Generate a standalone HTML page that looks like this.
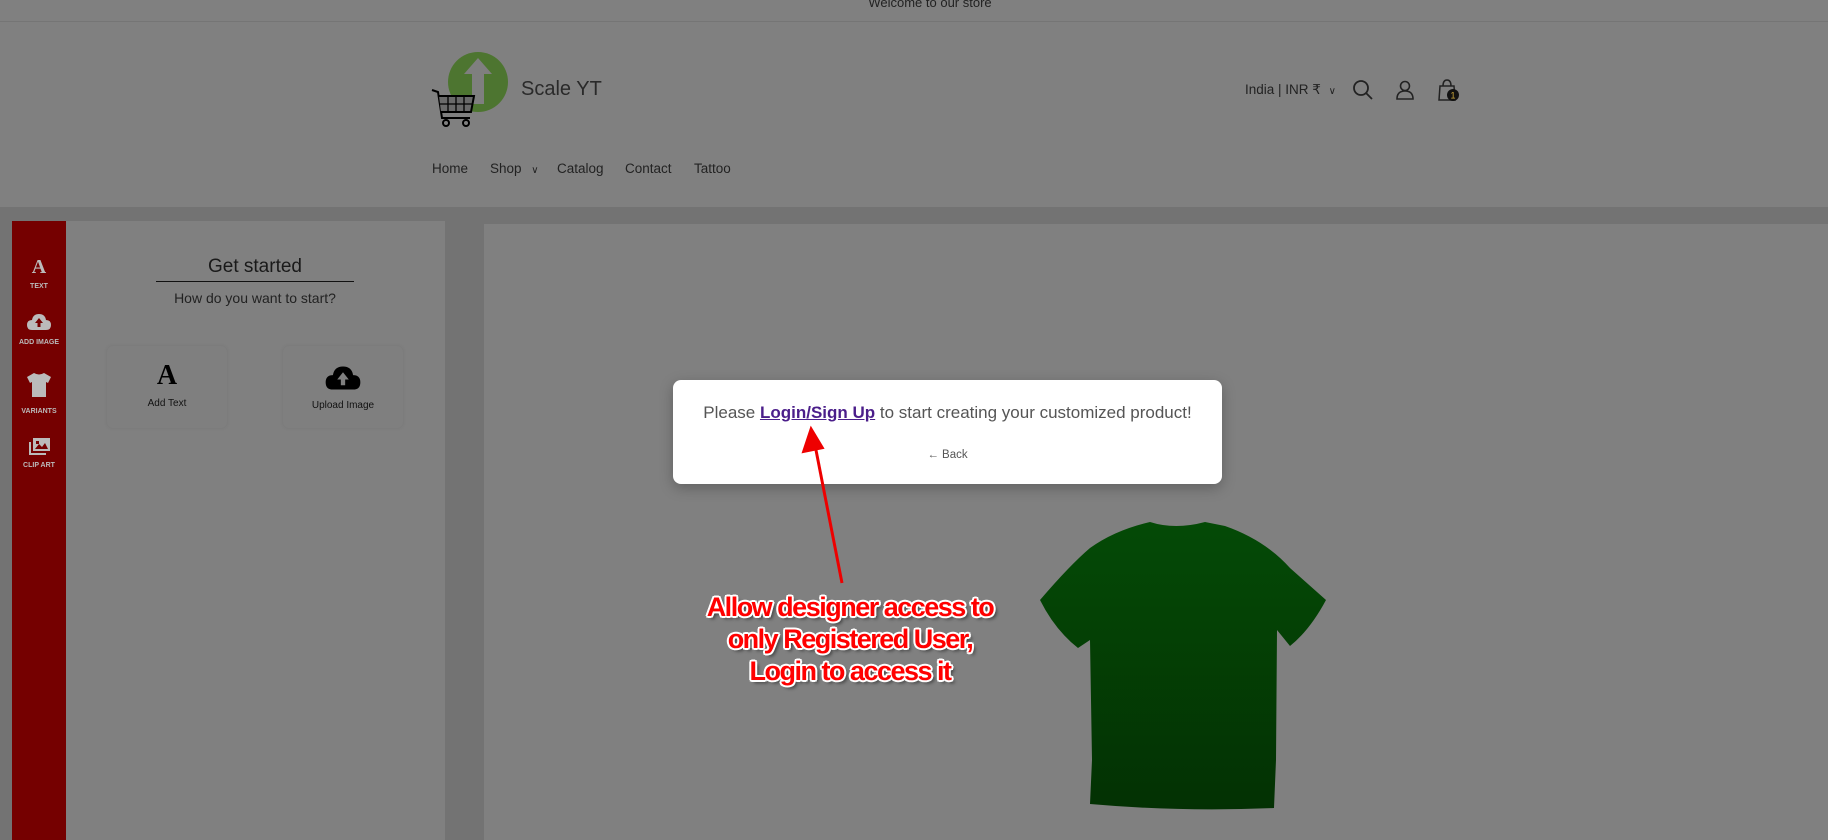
<!DOCTYPE html>
<html><head><meta charset="utf-8"><style>
*{margin:0;padding:0;box-sizing:border-box}
body{width:1828px;height:840px;overflow:hidden;background:#737373;font-family:"Liberation Sans",sans-serif;position:relative}
.abs{position:absolute}
.hdr{left:0;top:0;width:1828px;height:207px;background:#808080}
.nav span{position:absolute;top:161px;font-size:13.5px;color:#222}
.side{left:12px;top:221px;width:54px;height:619px;background:#750000}
.sideitem{position:absolute;left:12px;width:54px;text-align:center;color:#bbb;font-size:7px;font-weight:bold}
.panel{left:66px;top:221px;width:379px;height:619px;background:#808080}
.canvas{left:484px;top:224px;width:1344px;height:616px;background:#808080}
.card{position:absolute;top:346px;width:120px;height:82px;border-radius:6px;background:#7f7f7f;box-shadow:0 0 4px rgba(0,0,0,.08);text-align:center;font-size:10px;color:#111}
.modal{left:673px;top:380px;width:549px;height:104px;background:#fff;border-radius:8px;box-shadow:0 4px 14px rgba(0,0,0,.25)}
.ann{left:620px;width:460px;text-align:center;font-weight:bold;font-size:27px;letter-spacing:-1.5px;color:#f00;line-height:32px;text-shadow:2px 0 #fff,-2px 0 #fff,0 2px #fff,0 -2px #fff,1.5px 1.5px #fff,-1.5px -1.5px #fff,1.5px -1.5px #fff,-1.5px 1.5px #fff,3px 3px 3px rgba(0,0,0,.5)}
</style></head><body>
<div class="abs hdr"></div>
<div class="abs" style="left:0;top:21px;width:1828px;height:1px;background:#757575"></div>
<div class="abs" style="left:0;top:-5px;width:1860px;text-align:center;font-size:13px;color:#222">Welcome to our store</div>
<svg class="abs" style="left:430px;top:48px" width="80" height="80" viewBox="0 0 80 80">
<circle cx="48" cy="34" r="30" fill="#4d7530"/>
<path d="M48 10 L62 26 L54 26 L54 56 L42 56 L42 26 L34 26Z" fill="#7f7f7f"/>
<path d="M2 42 L8 44 L12 70 L40 70" stroke="#000" stroke-width="2" fill="none"/>
<path d="M9 48 L44 48 L41 64 L11 64" stroke="#000" stroke-width="2" fill="#6a6a6a"/>
<path d="M18 48V64M26 48V64M34 48V64M10 56H42" stroke="#000" stroke-width="1.3"/>
<circle cx="16" cy="75" r="3" fill="none" stroke="#000" stroke-width="2"/><circle cx="36" cy="75" r="3" fill="none" stroke="#000" stroke-width="2"/>
</svg>
<div class="abs" style="left:521px;top:78px;font-size:20px;color:#2a2a2a">Scale YT</div>
<div class="nav"><span style="left:432px">Home</span><span style="left:490px">Shop <small style="font-size:10px;margin-left:6px">&#8744;</small></span><span style="left:557px">Catalog</span><span style="left:625px">Contact</span><span style="left:694px">Tattoo</span></div>
<div class="abs" style="left:1245px;top:82px;font-size:13.5px;color:#222">India | INR ₹ <span style="font-size:10px;margin-left:4px">&#8744;</span></div>
<svg class="abs" style="left:1352px;top:78px" width="120" height="30" viewBox="0 0 120 30">
<circle cx="9" cy="10" r="7" fill="none" stroke="#222" stroke-width="1.8"/><path d="M14 15 L20 21" stroke="#222" stroke-width="1.8"/>
<circle cx="53" cy="8" r="4.5" fill="none" stroke="#222" stroke-width="1.6"/><path d="M45 21 Q45 13 53 13 Q61 13 61 21Z" fill="none" stroke="#222" stroke-width="1.6"/>
<path d="M88 8 H102 L103 22 H87Z" fill="none" stroke="#222" stroke-width="1.5"/><path d="M91 8 Q91 2 95 2 Q99 2 99 8" fill="none" stroke="#222" stroke-width="1.5"/>
<circle cx="101" cy="17" r="6" fill="#111"/><text x="101" y="20.5" font-size="9" fill="#c9a53a" text-anchor="middle" font-family="Liberation Sans">1</text>
</svg>
<div class="abs side"></div>
<div class="sideitem" style="top:256px;font-size:20px;font-family:'Liberation Serif',serif">A</div>
<div class="sideitem" style="top:283px">TEXT</div>
<svg class="abs" style="left:27px;top:313px" width="24" height="18" viewBox="0 0 24 18"><path d="M5 17 Q0 17 0 12 Q0 7 5 7 Q6 1 12 1 Q18 1 19 7 Q24 7 24 12 Q24 17 19 17Z" fill="#bbb"/><path d="M12 5 L16 10 H13.5 V14 H10.5 V10 H8Z" fill="#750000"/></svg>
<div class="sideitem" style="top:339px">ADD IMAGE</div>
<svg class="abs" style="left:26px;top:372px" width="26" height="26" viewBox="0 0 26 26"><path d="M8 1 Q13 4 18 1 L25 5 L22 11 L20 10 V25 H6 V10 L4 11 L1 5Z" fill="#bbb"/></svg>
<div class="sideitem" style="top:408px">VARIANTS</div>
<svg class="abs" style="left:27px;top:437px" width="24" height="20" viewBox="0 0 24 20"><rect x="6" y="1" width="17" height="13" fill="#bbb"/><path d="M8 12 L12 7 L15 10 L18 6 L21 12Z M9 4h3v3H9z" fill="#750000"/><path d="M3 5 V17 H19" stroke="#bbb" stroke-width="2" fill="none"/></svg>
<div class="sideitem" style="top:462px">CLIP ART</div>
<div class="abs panel"></div>
<div class="abs" style="left:156px;top:256px;width:198px;text-align:center;font-size:19px;color:#1a1a1a">Get started</div>
<div class="abs" style="left:156px;top:281px;width:198px;height:1px;background:#111"></div>
<div class="abs" style="left:120px;top:290px;width:270px;text-align:center;font-size:14px;color:#222">How do you want to start?</div>
<div class="card" style="left:107px"><div style="font-family:'Liberation Serif',serif;font-weight:bold;font-size:28px;margin-top:14px;color:#000">A</div><div style="margin-top:6px">Add Text</div></div>
<div class="card" style="left:283px"><svg style="margin-top:19px" width="36" height="26" viewBox="0 0 24 18"><path d="M5 17 Q0 17 0 12 Q0 7 5 7 Q6 1 12 1 Q18 1 19 7 Q24 7 24 12 Q24 17 19 17Z" fill="#000"/><path d="M12 5 L16 10 H13.5 V14 H10.5 V10 H8Z" fill="#7f7f7f"/></svg><div style="margin-top:6px">Upload Image</div></div>
<div class="abs canvas"></div>
<svg class="abs" style="left:0;top:0" width="1828" height="840">
<defs><linearGradient id="g" x1="0" y1="0" x2="0" y2="1"><stop offset="0" stop-color="#044a06"/><stop offset="1" stop-color="#033103"/></linearGradient></defs>
<path d="M1150 522 Q1175 530 1205 522 L1225 526 Q1265 540 1290 568 L1326 600 Q1310 630 1290 646 L1277 630 L1276 760 L1274 808 Q1180 812 1090 804 L1092 760 L1090 640 L1078 648 Q1055 630 1040 600 Q1070 565 1090 548 Q1115 530 1150 522Z" fill="url(#g)"/>
</svg>
<div class="abs modal"></div>
<div class="abs" style="left:673px;top:403px;width:549px;text-align:center;font-size:17px;color:#555">Please <a style="color:#4b1e8a;font-weight:bold;text-decoration:underline">Login/Sign Up</a> to start creating your customized product!</div>
<div class="abs" style="left:673px;top:449px;width:549px;text-align:center;font-size:11.5px;color:#555">&#8592; Back</div>
<svg class="abs" style="left:0;top:0" width="1828" height="840">
<path d="M842 583 L815 445" stroke="#e00" stroke-width="3"/><path d="M811 428 L803 452 L823 448Z" fill="#e00" stroke="#e00" stroke-width="2"/>
</svg>
<div class="abs ann" style="top:591px">Allow designer access to<br>only Registered User,<br>Login to access it</div>
</body></html>
